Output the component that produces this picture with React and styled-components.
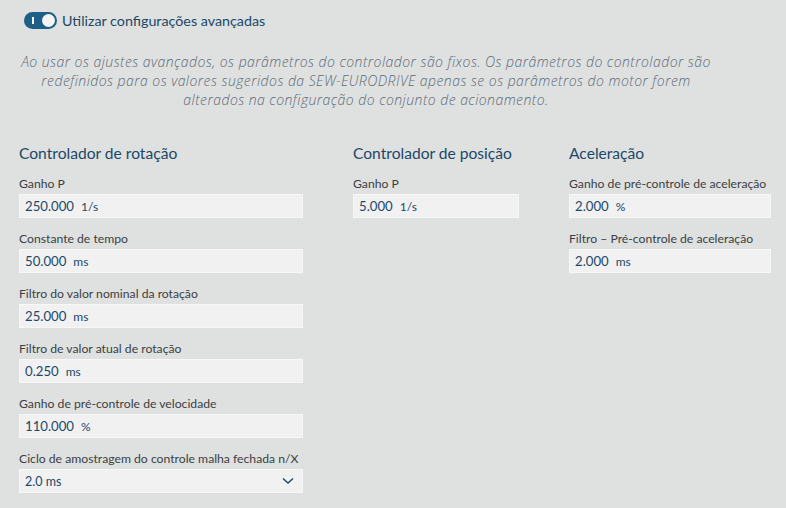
import React, { useState } from 'react';
import styled, { createGlobalStyle } from 'styled-components';

const GlobalStyle = createGlobalStyle`
  html, body {
    margin: 0;
    padding: 0;
    background: #dfe1e0;
  }
  body {
    font-family: "Lato", "Open Sans", sans-serif;
  }
`;

const Page = styled.div`
  width: 786px;
  height: 508px;
  background: #dfe1e0;
  padding: 11px 15px 0 19px;
  box-sizing: border-box;
  overflow: hidden;
`;

const ToggleRow = styled.label`
  display: flex;
  align-items: center;
  gap: 5px;
  margin-left: 5px;
  height: 18px;
  font-size: 14.3px;
  color: #1b4868;
  cursor: pointer;
`;

const Track = styled.span`
  position: relative;
  width: 33px;
  height: 17px;
  border-radius: 9px;
  background: ${(p) => (p.$on ? '#1e5f87' : '#9aa3aa')};
  flex-shrink: 0;
  &::before {
    content: '';
    position: absolute;
    left: 8px;
    top: 5px;
    width: 1.5px;
    height: 7px;
    background: #fff;
    display: ${(p) => (p.$on ? 'block' : 'none')};
  }
  &::after {
    content: '';
    position: absolute;
    top: 2px;
    left: ${(p) => (p.$on ? '18px' : '2px')};
    width: 13px;
    height: 13px;
    border-radius: 50%;
    background: #f4f4f4;
  }
`;

const Description = styled.p`
  width: 694px;
  margin: 23px 0 0 0;
  text-align: center;
  font-family: "Open Sans", sans-serif;
  font-style: italic;
  font-weight: 300;
  font-size: 14px;
  letter-spacing: 0.45px;
  line-height: 19px;
  color: #5b6b7a;
`;

const Columns = styled.div`
  display: grid;
  grid-template-columns: 284px 166px 202px;
  column-gap: 50px;
  margin-top: 34px;
`;

const Column = styled.div`
  display: flex;
  flex-direction: column;
`;

const Heading = styled.h3`
  margin: 0 0 13px 0;
  font-size: 15.6px;
  font-weight: 400;
  line-height: 20px;
  color: #1b4868;
`;

const Field = styled.div`
  display: flex;
  flex-direction: column;
  margin-bottom: 13px;
`;

const Label = styled.span`
  font-size: 12.2px;
  line-height: 16px;
  color: #3a3f44;
  margin-bottom: 2px;
  white-space: nowrap;
`;

const Box = styled.div`
  height: 24px;
  box-sizing: border-box;
  display: flex;
  align-items: center;
  gap: 7px;
  padding: 0 8px 0 5px;
  background: #f1f1f1;
  border: 1px solid #f7f7f7;
  color: #1b4868;
`;

const Value = styled.span`
  font-size: 13.2px;
`;

const Unit = styled.span`
  font-size: 12px;
`;

const SelectText = styled.span`
  font-size: 12.5px;
  flex: 1;
`;

const Chevron = () => (
  <svg width="12" height="8" viewBox="0 0 12 8">
    <path d="M1 1.5 L6 6 L11 1.5" fill="none" stroke="#1b4868" strokeWidth="1.4" />
  </svg>
);

const NumberField = ({ label, value, unit }) => (
  <Field>
    <Label>{label}</Label>
    <Box>
      <Value>{value}</Value>
      <Unit>{unit}</Unit>
    </Box>
  </Field>
);

const rotation = [
  { label: 'Ganho P', value: '250.000', unit: '1/s' },
  { label: 'Constante de tempo', value: '50.000', unit: 'ms' },
  { label: 'Filtro do valor nominal da rotação', value: '25.000', unit: 'ms' },
  { label: 'Filtro de valor atual de rotação', value: '0.250', unit: 'ms' },
  { label: 'Ganho de pré-controle de velocidade', value: '110.000', unit: '%' },
];

const acceleration = [
  { label: 'Ganho de pré-controle de aceleração', value: '2.000', unit: '%' },
  { label: 'Filtro – Pré-controle de aceleração', value: '2.000', unit: 'ms' },
];

function App() {
  const [advanced, setAdvanced] = useState(true);

  return (
    <Page>
      <GlobalStyle />
      <ToggleRow onClick={() => setAdvanced(!advanced)}>
        <Track $on={advanced} />
        Utilizar configurações avançadas
      </ToggleRow>
      <Description>
        Ao usar os ajustes avançados, os parâmetros do controlador são fixos. Os parâmetros do controlador são
        <br />
        redefinidos para os valores sugeridos da SEW-EURODRIVE apenas se os parâmetros do motor forem
        <br />
        alterados na configuração do conjunto de acionamento.
      </Description>
      <Columns>
        <Column>
          <Heading>Controlador de rotação</Heading>
          {rotation.map((f) => (
            <NumberField key={f.label} {...f} />
          ))}
          <Field>
            <Label>Ciclo de amostragem do controle malha fechada n/X</Label>
            <Box>
              <SelectText>2.0 ms</SelectText>
              <Chevron />
            </Box>
          </Field>
        </Column>
        <Column>
          <Heading>Controlador de posição</Heading>
          <NumberField label="Ganho P" value="5.000" unit="1/s" />
        </Column>
        <Column>
          <Heading>Aceleração</Heading>
          {acceleration.map((f) => (
            <NumberField key={f.label} {...f} />
          ))}
        </Column>
      </Columns>
    </Page>
  );
}

export default App;
